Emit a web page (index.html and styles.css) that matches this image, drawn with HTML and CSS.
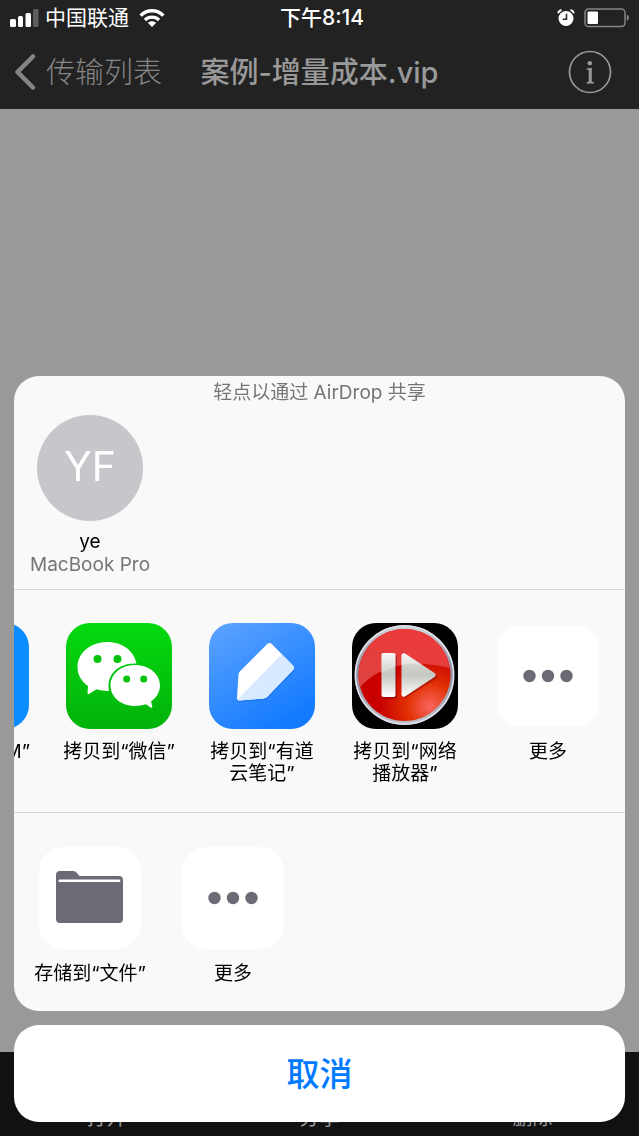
FILE: index.html
```html
<!DOCTYPE html>
<html lang="zh-CN">
<head>
<meta charset="utf-8">
<meta name="viewport" content="width=device-width, initial-scale=1">
<title>案例-增量成本.vip</title>
<link rel="stylesheet" href="styles.css">
</head>
<body>
<div class="screen">
  <header class="header">
    <div class="status">
      <div class="status-left">
        <svg class="signal" width="29" height="18" viewBox="0 0 29 18" aria-hidden="true"><g fill="#fff"><rect x="0" y="10" width="6" height="8" rx="1.5"/><rect x="8" y="7" width="5" height="11" rx="1.5"/><rect x="15.500" y="4" width="5.500" height="14" rx="1.500"/></g><rect x="23" y="0" width="5.500" height="18" rx="1.500" fill="#5c5c5c"/></svg>
        <span>中国联通</span>
        <svg class="wifi" width="26" height="18" viewBox="0 0 26 18" aria-hidden="true"><g fill="none" stroke="#fff" stroke-width="3.400"><path d="M1.600 6.600C8 .2 18 .2 24.400 6.600"/><path d="M6 11C10 7.200 16 7.200 20 11"/></g><path d="M8.800 13.800C11.300 11.700 14.700 11.700 17.200 13.800L13 18Z" fill="#fff"/></svg>
      </div>
      <time class="clock">下午8:14</time>
      <div class="status-right">
        <svg width="18" height="18" viewBox="0 0 18 18" aria-hidden="true"><circle cx="9" cy="9.500" r="7.500" fill="#fff"/><path d="M1 4.200Q1.800 1.600 4.500 1M17 4.200Q16.200 1.600 13.500 1" fill="none" stroke="#fff" stroke-width="1.800"/><path d="M9.500 4.800V10.300H5.800" fill="none" stroke="#222" stroke-width="1.500"/></svg>
        <svg width="46" height="20" viewBox="0 0 46 20" aria-hidden="true"><rect x="1" y="1" width="40" height="17.500" rx="3.500" fill="none" stroke="#858585" stroke-width="1.500"/><rect x="3.500" y="3.500" width="10.500" height="12.500" rx="1" fill="#fff"/><path d="M42.800 6.500Q45 7.500 45 9.700T42.800 13Z" fill="#858585"/></svg>
      </div>
    </div>
    <nav class="nav">
      <button class="back" type="button">
        <svg width="22" height="36" viewBox="0 0 22 36" aria-hidden="true"><path d="M19 2.500L3.500 18L19 33.500" fill="none" stroke="#858585" stroke-width="4.500" stroke-linecap="round" stroke-linejoin="round"/></svg>
        <span>传输列表</span>
      </button>
      <h1 class="title">案例-增量成本.vip</h1>
      <button class="info" type="button" aria-label="详细信息">
        <svg width="44" height="44" viewBox="0 0 44 44" aria-hidden="true"><circle cx="22" cy="22" r="20.500" fill="none" stroke="#999" stroke-width="1.700"/><circle cx="21.800" cy="13.300" r="2.300" fill="#999"/><path d="M18.500 18.500L23.800 17.700V31.500L26 32.300V33.500H18.500V32.300L20.700 31.500V20L18.500 19.500Z" fill="#999"/></svg>
      </button>
    </nav>
  </header>
  <main class="content"></main>
  <footer class="tabs">
    <button class="tab" type="button">打开</button>
    <button class="tab" type="button">分享</button>
    <button class="tab" type="button">删除</button>
  </footer>
</div>

<div class="sheet" role="dialog" aria-label="共享">
  <div class="panel">
    <section class="airdrop">
      <h2 class="hint">轻点以通过 AirDrop 共享</h2>
      <div class="row">
        <button class="item" type="button">
          <span class="avatar">YF</span>
          <span class="person">ye<span class="device">MacBook Pro</span></span>
        </button>
      </div>
    </section>

    <section class="apps">
      <div class="row row-scrolled">
        <button class="item" type="button">
          <span class="icon icon-tim"></span>
          <span class="label">拷贝到“TIM”</span>
        </button>
        <button class="item" type="button">
          <svg class="icon" viewBox="0 0 106 106" aria-hidden="true">
            <defs><linearGradient id="green" x2="0" y2="1"><stop stop-color="#04d90f"/><stop offset="1" stop-color="#02b20a"/></linearGradient></defs>
            <rect width="106" height="106" fill="url(#green)"/>
            <path d="M41.500 19C24.500 19 11.500 30 11.500 44C11.500 52 15.500 58.500 22 63L21.500 70.500Q21.800 71.500 23 71L30.500 66.300Q36 68.300 43 68C40 52 52 39.500 70.500 40.500C68 28 56.500 19 41.500 19Z" fill="#fff"/>
            <path d="M69 42C55 42 44.500 51 44.500 62.500C44.500 74 55 83 69 83Q75 83 80 81.200L85 84.700Q86.500 85.300 86.300 83.500L85 78.500C90.500 74.500 94 69 94 62.500C94 51 83 42 69 42Z" fill="#fff"/>
            <g fill="#03c30c"><circle cx="31.500" cy="36" r="4"/><circle cx="51.500" cy="36" r="4"/><circle cx="60.700" cy="56" r="3.500"/><circle cx="77.700" cy="56" r="3.500"/></g>
          </svg>
          <span class="label">拷贝到“微信”</span>
        </button>
        <button class="item" type="button">
          <svg class="icon" viewBox="0 0 106 106" aria-hidden="true">
            <defs><linearGradient id="blue" x2=".6" y2="1"><stop stop-color="#5ea4ff"/><stop offset="1" stop-color="#147bff"/></linearGradient></defs>
            <rect width="106" height="106" fill="url(#blue)"/>
            <path d="M62 22L84.500 44.500Q86.500 47 84.500 49L59.500 74.500Q58 76.800 55 77L31 79Q28.500 79 29 76.500L58 22Z" fill="#0759cc" opacity=".3"/>
            <path d="M58 21.200Q60.500 19 63 21.200L84 42.500Q86 45 84 47L59 73Q57.500 75 54.500 75.500L30.500 77.500Q28 77.500 28 75L29.500 51.500Q29.700 49.500 31 48.200Z" fill="#fff"/>
            <path d="M72.800 31.300L84 42.500Q86 45 84 47L59 73Q57.500 75 54.500 75.500L30.500 77.500Q29.300 77.500 28.600 76.500Z" fill="#d8eaff"/>
          </svg>
          <span class="label">拷贝到“有道云笔记”</span>
        </button>
        <button class="item" type="button">
          <svg class="icon" viewBox="0 0 106 106" aria-hidden="true">
            <defs>
              <radialGradient id="red" cx=".78" cy=".84" r=".55"><stop stop-color="#fa6660"/><stop offset=".45" stop-color="#e23205"/><stop offset="1" stop-color="#c80000"/></radialGradient>
              <linearGradient id="gloss" x1=".6" x2=".3" y2="1"><stop stop-color="#ee3939"/><stop offset="1" stop-color="#dd4340"/></linearGradient>
              <linearGradient id="rim" x2="0" y2="1"><stop stop-color="#d4d4dc"/><stop offset=".45" stop-color="#8d8e9e"/><stop offset="1" stop-color="#bfc0cc"/></linearGradient>
              <linearGradient id="metal" x2="0" y2="1"><stop stop-color="#f5f5f3"/><stop offset=".3" stop-color="#cfcfcc"/><stop offset=".5" stop-color="#c5c8c2"/><stop offset="1" stop-color="#fff"/></linearGradient>
              <clipPath id="disc"><circle cx="52.500" cy="52" r="46"/></clipPath>
            </defs>
            <rect width="106" height="106" fill="#000"/>
            <circle cx="52.500" cy="52" r="50" fill="url(#rim)"/>
            <circle cx="52.500" cy="52" r="49" fill="none" stroke="#dfe0e8" stroke-width="1.500"/>
            <circle cx="52.500" cy="52" r="46" fill="url(#red)"/>
            <path d="M4 70C22 43 58 34 101 46V0H4Z" fill="url(#gloss)" clip-path="url(#disc)"/>
            <g fill="#7c0000" opacity=".45"><rect x="31" y="32" width="14" height="44" rx="2"/><path d="M52 32L85 52V55L52 76Z"/></g>
            <rect x="29.500" y="30" width="14" height="44" rx="2" fill="url(#metal)"/>
            <path d="M49.500 32Q50 29.500 53 30.500L82.500 50Q85 52 82.500 54L53 73.500Q50 74.500 49.500 72Z" fill="url(#metal)"/>
            <path d="M29.500 50Q36 46 43.500 43.500V30H29.500ZM49.500 42Q61 39.500 71 42.300L53 30.500Q50 29.500 49.500 32Z" fill="#fff" opacity=".3"/>
          </svg>
          <span class="label">拷贝到“网络播放器”</span>
        </button>
        <button class="item" type="button">
          <svg class="icon tile" viewBox="0 0 102 102" aria-hidden="true"><g fill="#6c6b75"><circle cx="32.500" cy="51" r="6.200"/><circle cx="51" cy="51" r="6.200"/><circle cx="69.500" cy="51" r="6.200"/></g></svg>
          <span class="label">更多</span>
        </button>
      </div>
    </section>

    <section class="actions">
      <div class="row">
        <button class="item" type="button">
          <svg class="icon tile" viewBox="0 0 102 102" aria-hidden="true"><path d="M17 28Q17 24 21 24H34Q36.500 24 38 26L40.500 29H80Q84 29 84 33V72Q84 76 80 76H21Q17 76 17 72Z" fill="#6c6b75"/><path d="M19.500 35V33.500Q19.500 32.500 20.500 32.500H80Q81.200 32.500 81.200 33.500V35Z" fill="#fff"/></svg>
          <span class="label">存储到“文件”</span>
        </button>
        <button class="item" type="button">
          <svg class="icon tile" viewBox="0 0 102 102" aria-hidden="true"><g fill="#6c6b75"><circle cx="32.500" cy="51" r="6.200"/><circle cx="51" cy="51" r="6.200"/><circle cx="69.500" cy="51" r="6.200"/></g></svg>
          <span class="label">更多</span>
        </button>
      </div>
    </section>
  </div>
  <button class="cancel" type="button">取消</button>
</div>
</body>
</html>
```
FILE: styles.css
```css
* {
  box-sizing: border-box;
}

body {
  margin: 0;
  font-family: Inter, "Noto Sans CJK SC", sans-serif;
}

button {
  padding: 0;
  border: 0;
  background: none;
  color: inherit;
  font: inherit;
}

svg {
  display: block;
  flex: none;
}

.screen {
  display: flex;
  flex-direction: column;
  min-height: 100vh;
}

.header {
  padding-bottom: 14px;
  background: #222;
  color: #fff;
}

.status {
  display: grid;
  grid-template-columns: 1fr auto 1fr;
  align-items: center;
  height: 36px;
  padding: 0 9px 0 10px;
  font-size: 21px;
  line-height: 24px;
}

.status-left,
.status-right {
  display: flex;
  align-items: center;
}

.status-left {
  gap: 6px;
}

.wifi {
  margin-left: 4px;
}

.status-right {
  justify-content: flex-end;
  gap: 9px;
}

.clock {
  padding-left: 4px;
  font-weight: 500;
}

.nav {
  display: grid;
  grid-template-columns: minmax(0, 1fr) auto minmax(0, 1fr);
  align-items: center;
  height: 59px;
  padding: 12px 14px 0;
  font-size: 29px;
  line-height: 40px;
}

.back {
  display: flex;
  align-items: center;
  gap: 10px;
  color: #858585;
  font-weight: 300;
  white-space: nowrap;
}

.back span,
.title {
  padding-top: 2px;
}

.title {
  margin: 0;
  color: #999;
  font-size: 29px;
  font-weight: 500;
  white-space: nowrap;
}

.info {
  justify-self: end;
  margin-right: 13px;
}

.content {
  flex: 1;
  background: #999;
}

.tabs {
  display: grid;
  grid-template-columns: repeat(3, 1fr);
  align-items: end;
  height: 84px;
  padding-bottom: 6px;
  background: #111;
  color: #999;
  font-size: 20px;
  line-height: 24px;
}

.sheet {
  position: fixed;
  right: 14px;
  bottom: 14px;
  left: 14px;
  display: flex;
  flex-direction: column;
  gap: 14px;
}

.panel {
  overflow: hidden;
  border-radius: 25px;
  background: #f9f9f9;
  color: #000;
  font-size: 19px;
  line-height: 22px;
}

.airdrop {
  padding: 5px 0 13px;
  border-bottom: 1px solid #d3d3d8;
}

.apps {
  padding: 33px 0 27px;
  border-bottom: 1px solid #d3d3d8;
}

.actions {
  padding: 32px 0 26px;
}

.hint {
  margin: 0 0 10px;
  color: #757575;
  font-size: 19px;
  font-weight: 400;
  line-height: 24px;
  text-align: center;
}

.row {
  display: flex;
  gap: 23px;
  padding-left: 16px;
}

.row-scrolled {
  margin-left: -98px;
  padding-left: 0;
}

.item {
  display: flex;
  flex: none;
  flex-direction: column;
  align-items: center;
  width: 120px;
}

.avatar {
  display: flex;
  align-items: center;
  justify-content: center;
  width: 106px;
  height: 106px;
  margin-bottom: 9px;
  padding-bottom: 4px;
  border-radius: 50%;
  background: #c7c6cb;
  color: #fff;
  font-size: 41px;
  font-weight: 400;
}

.person {
  line-height: 23px;
  white-space: nowrap;
}

.device {
  display: block;
  color: #757575;
}

.icon {
  width: 106px;
  height: 106px;
  margin-bottom: 12px;
  border-radius: 24px;
}

.icon-tim {
  background: #0a8dff;
}

.tile {
  width: 102px;
  height: 102px;
  margin-top: 2px;
  margin-bottom: 14px;
  background: #fff;
}

.label {
  width: 120px;
}

.cancel {
  height: 97px;
  padding-bottom: 4px;
  border-radius: 25px;
  background: #fff;
  color: #007aff;
  font-size: 33px;
  font-weight: 500;
}
```
